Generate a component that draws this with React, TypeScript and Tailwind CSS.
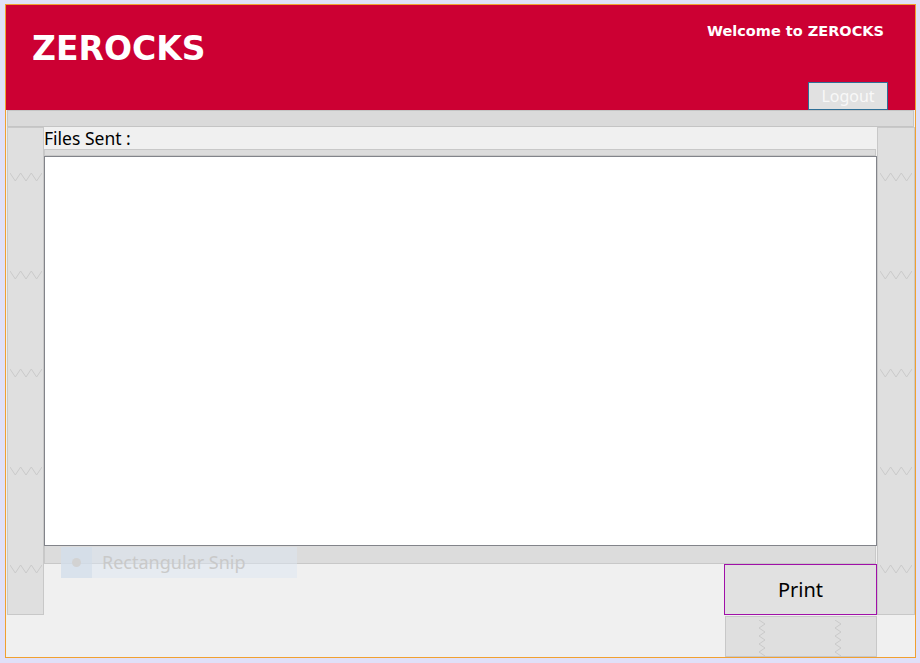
import React from "react";

function ZigH() {
  return (
    <svg width="32" height="10" viewBox="0 0 32 10" className="block">
      <polyline points="0,1 5.3,9 10.6,1 16,9 21.3,1 26.6,9 32,1" fill="none" stroke="#cacaca" strokeWidth="1" />
    </svg>
  );
}

function ZigV() {
  return (
    <svg width="10" height="36" viewBox="0 0 10 36" className="block">
      <polyline points="2,0 8,4 2,8 8,12 2,16 8,20 2,24 8,28 2,32 8,36" fill="none" stroke="#cacaca" strokeWidth="1" />
    </svg>
  );
}

function SidePanel() {
  return (
    <div className="h-full w-full bg-[#dfdfdf] border border-[#c8c8c8] flex flex-col items-center pt-[44px] gap-[88px]">
      <ZigH />
      <ZigH />
      <ZigH />
      <ZigH />
      <ZigH />
    </div>
  );
}

export default function App() {
  return (
    <div className="w-[920px] h-[663px] bg-[#e0e0f8] pt-[4px] pl-[5px] overflow-hidden font-['Noto_Sans',sans-serif]">
      <div className="w-[911px] h-[654px] border border-[#f0a030] bg-[#f0f0f0] flex flex-col">
        {/* Header */}
        <div className="h-[105px] bg-[#cc0033] flex justify-between">
          <div className="pl-[26px] pt-[25px] text-white font-bold text-[33px] leading-[38px] font-['DejaVu_Sans',sans-serif]">
            ZEROCKS
          </div>
          <div className="flex flex-col items-end pr-[30px] pt-[16px]">
            <div className="text-white font-bold text-[14.5px] leading-[20px] pr-[1px] font-['DejaVu_Sans',sans-serif]">
              Welcome to ZEROCKS
            </div>
            <button className="mt-[41px] w-[80px] h-[28px] bg-[#e1e1e1] border border-[#2f6f96] text-[#f8f8f8] text-[16px] leading-[24px] mr-[-3px]">
              Logout
            </button>
          </div>
        </div>

        {/* Strip */}
        <div className="h-[18px] mx-[1px] bg-[#dadada] border border-[#c4c4c4]" />

        {/* Body */}
        <div className="flex-1 flex flex-col relative">
          <div className="h-[488px] flex">
            <div className="w-[37px] ml-[1px]">
              <SidePanel />
            </div>
            <div className="w-[833px] flex flex-col">
              <div className="h-[22px] text-[17.5px] leading-[22px] text-black">Files Sent :</div>
              <div className="h-[7px] mr-[1px] bg-[#dcdcdc] border border-[#c8c8c8]" />
              <div className="h-[390px] bg-white border border-[#82848a]" />
              <div className="h-[18px] mr-[1px] bg-[#dcdcdc] border border-[#c8c8c8] border-t-0" />
              <div className="flex-1 flex justify-end">
                <button className="w-[153px] h-[51px] bg-[#e1e1e1] border border-[#a010a8] text-[20px] text-black">
                  Print
                </button>
              </div>
            </div>
            <div className="w-[38px]">
              <SidePanel />
            </div>
          </div>
          <div className="flex-1 flex">
            <div className="ml-[719px] mt-[1px] w-[152px] bg-[#dfdfdf] border border-[#c8c8c8] flex pl-[31px] gap-[66px] pt-[3px]">
              <ZigV />
              <ZigV />
            </div>
          </div>

          {/* faint overlay */}
          <div className="absolute left-[55px] top-[420px] w-[236px] h-[31px] bg-[#dbe6f2]/50 flex items-center">
            <div className="w-[31px] h-full bg-[#d0dcea]/60 flex items-center justify-center">
              <div className="w-[9px] h-[9px] rounded-full bg-[#d2d2d2]" />
            </div>
            <span className="ml-[10px] text-[18px] text-[#c9c9c9]">Rectangular Snip</span>
          </div>
        </div>
      </div>
    </div>
  );
}
